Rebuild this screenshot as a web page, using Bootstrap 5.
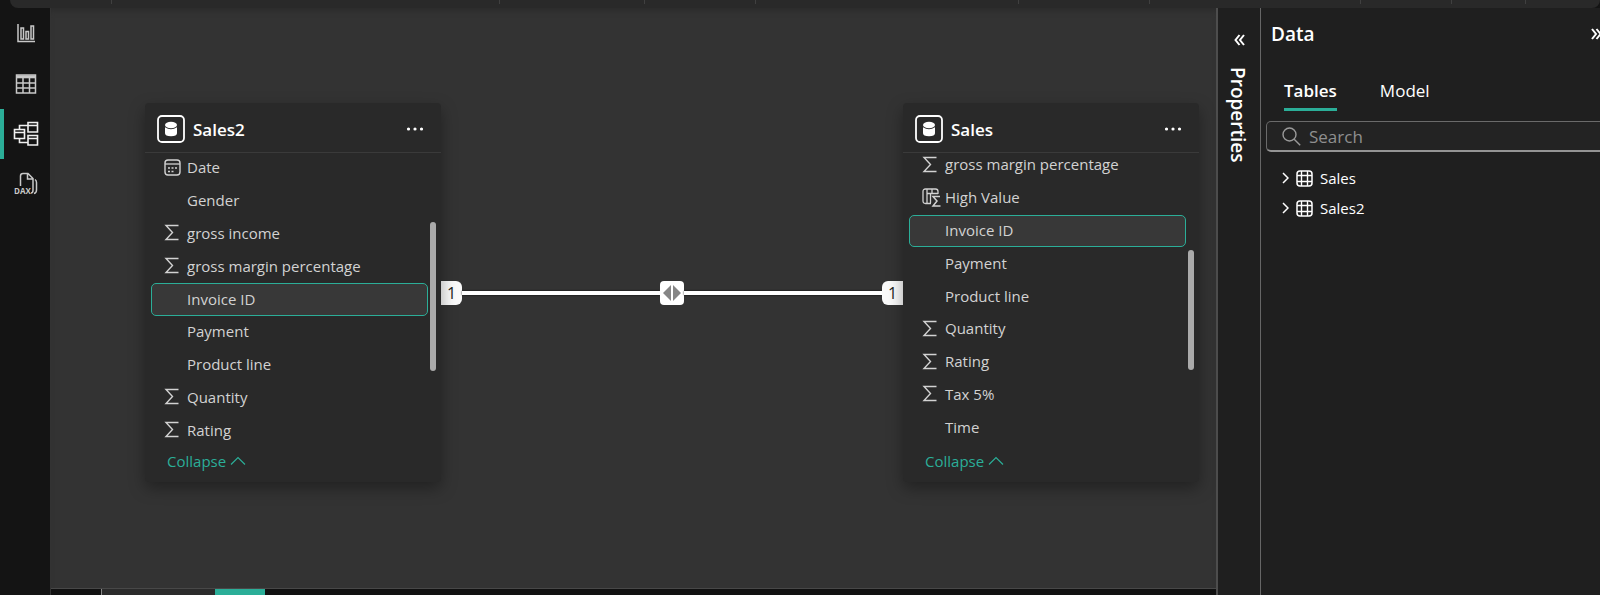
<!DOCTYPE html>
<html lang="en" data-bs-theme="dark">
<head>
<meta charset="utf-8">
<meta name="viewport" content="width=device-width, initial-scale=1">
<title>Model view</title>
<link href="https://cdn.jsdelivr.net/npm/bootstrap@5.3.0/dist/css/bootstrap.min.css" rel="stylesheet">
<style>
  :root { --accent: #2bae98; --line: #4d4d4d; }
  body { font-family: "Open Sans", "Noto Sans", sans-serif; font-size: 15px; line-height: 20px; background: #141414; color: #d2d2d2; }
  svg { display: block; flex: none; fill: none; stroke: currentColor; }
  button { color: inherit; }

  .ribbon { height: 8px; margin-left: 10px; background: #292929; border-radius: 0 0 8px 8px; }
  .ribbon-group { height: 4px; border-right: 1px solid #404040; }

  .rail { width: 51px; border-right: 1px solid #333; color: #c8c8c8; padding-top: 1px; }
  .rail-btn { height: 50px; border: 0; border-left: 4px solid transparent; background: none; padding: 0 2px 0 0; }
  .rail-btn.active { border-left-color: var(--accent); color: #f0f0f0; }

  .model-canvas { background: #333; padding: 95px 17px 0 94px; box-shadow: inset 0 6px 6px -4px #2a2a2a; }
  .node { width: 296px; height: 379px; background: #292929; border-radius: 4px; box-shadow: 0 6px 16px rgba(0,0,0,.35); }
  .node-head { height: 50px; border-bottom: 1px solid #3a3a3a; padding: 3px 17px 0 12px; color: #fff; }
  .node-title { font-size: 17px; font-weight: 600; margin: 0 0 0 8px; padding-top: 2px; line-height: 24px; }
  .field-window { height: 294px; overflow: hidden; }
  .field-list { height: 295px; margin: -1px 0 0; padding: 0 13px 0 6px; }
  .field-list.scrolled { margin-top: -4px; }
  .field { flex: 1 1 0; padding: 0 0 2px 12px; gap: 6px; border: 1px solid transparent; border-radius: 5px; }
  .field.selected { border-color: var(--accent); background: #383838; }
  .field-icon { width: 17px; }
  .collapse-btn { color: var(--accent); border: 0; background: none; padding: 4px 0 0 22px; gap: 4px; }
  .thumb { position: absolute; width: 6px; right: 5px; border-radius: 3px; background: #aaa; }
  .thumb-a { top: 119px; height: 149px; }
  .thumb-b { top: 147px; height: 120px; }

  .relation { margin-top: 177px; height: 25px; }
  .relation-line { height: 4px; background: #fff; box-shadow: 0 0 2px #000; }
  .relation-end { width: 21px; height: 24px; background: #fafafa; color: #222; font-size: 16px; }
  .relation-mid { width: 24px; height: 24px; background: #fff; border-radius: 4px; }

  .page-tabs { height: 7px; border-top: 1px solid #484848; background: #111; }
  .page-tab { width: 114px; margin-left: 50px; background: #2b2b2b; border-left: 1px solid #888; }
  .page-add { width: 50px; background: var(--accent); }

  .props { width: 45px; background: #1f1f1f; border-left: 2px solid var(--line); border-right: 1px solid #666; color: #fff; padding-top: 26px; gap: 21px; }
  .props-title { writing-mode: vertical-rl; font-size: 19px; font-weight: 600; line-height: 24px; margin: 0; padding-right: 2px; }
  .plain { border: 0; background: none; padding: 0; }
  .data-pane { width: 339px; background: #1f1f1f; color: #fff; }
  .data-head { height: 51px; padding-left: 10px; margin-right: -2px; }
  .data-title { font-size: 19px; font-weight: 600; line-height: 24px; margin: 0; }
  .data-tabs { padding: 20px 0 0 23px; gap: 43px; }
  .data-tab { border: 0; background: none; padding: 0 0 5px; font-size: 17px; line-height: 24px; border-bottom: 3px solid transparent; }
  .data-tab.active { font-weight: 600; border-bottom-color: var(--accent); }
  .search-box { height: 31px; margin: 10px -8px 0 5px; padding-left: 15px; gap: 8px; border: 1px solid #6a6a6a; border-bottom: 2px solid #949494; border-radius: 5px; background: #232323; color: #9a9a9a; }
  .search-box input { border: 0; background: none; outline: 0; color: #fff; font-size: 17px; padding: 2px 0 0; width: 200px; }
  .search-box input::placeholder { color: #8f8f8f; opacity: 1; }
  .tree { margin: 11px 0 0; padding-left: 21px; }
  .tree-item { height: 30px; }
  .tree-item button { gap: 7px; }
</style>
</head>
<body class="d-flex flex-column vh-100 overflow-hidden">

<svg width="0" height="0" class="position-absolute" aria-hidden="true">
  <symbol id="sigma" viewBox="0 0 17 17"><path d="M14.500 1.500H2l6.500 7L2 15.500h12.500" stroke-width="1.400"/></symbol>
  <symbol id="db" viewBox="0 0 28 28"><rect x="1" y="1" width="26" height="26" rx="4" stroke-width="1.800"/><ellipse cx="14" cy="10" rx="6" ry="3.200" fill="currentColor" stroke="none"/><path d="M8 12.300q6 4 12 0v6q0 3-6 3t-6-3z" fill="currentColor" stroke="none"/></symbol>
  <symbol id="dots" viewBox="0 0 18 6"><path d="M2.500 3h.01M9 3h.01M15.500 3h.01" stroke-width="3.200" stroke-linecap="round"/></symbol>
  <symbol id="up" viewBox="0 0 16 10"><path d="M1 8.500 8 1.500l7 7" stroke-width="1.200"/></symbol>
  <symbol id="grid" viewBox="0 0 17 17"><rect x="1" y="1" width="15" height="15" rx="3" stroke-width="1.500"/><path d="M5.500 1v15M11.500 1v15M1 5.500h15M1 11.500h15" stroke-width="1.400"/></symbol>
  <symbol id="chev" viewBox="0 0 7 12"><path d="m1 1 5 5-5 5" stroke-width="1.500"/></symbol>
</svg>

<header class="ribbon d-flex flex-shrink-0">
  <div class="ribbon-group" style="width:102px"></div>
  <div class="ribbon-group" style="width:388px"></div>
  <div class="ribbon-group" style="width:145px"></div>
  <div class="ribbon-group" style="width:111px"></div>
  <div class="ribbon-group" style="width:263px"></div>
  <div class="ribbon-group" style="width:131px"></div>
  <div class="ribbon-group" style="width:211px"></div>
  <div class="ribbon-group" style="width:91px"></div>
  <div class="ribbon-group" style="width:74px"></div>
</header>

<div class="d-flex flex-grow-1 overflow-hidden">
  <nav class="rail d-flex flex-column flex-shrink-0" aria-label="Views">
    <button class="rail-btn d-flex align-items-center justify-content-center" aria-label="Report view">
      <svg width="20" height="20" viewBox="0 0 20 20" stroke-width="1.500"><path d="M2 0v17.500h17"/><path d="M5 4h2.500v11H5zM10 7.500h2.500V15H10zM15 2h2.500v13H15z" stroke-width="1.500"/></svg>
    </button>
    <button class="rail-btn d-flex align-items-center justify-content-center" aria-label="Table view">
      <svg width="22" height="20" viewBox="0 0 22 20" stroke-width="1.500"><path d="M1.500 1h19v18h-19zM1.500 9h19M1.500 14h19M8 4v15M14.500 4v15"/><path d="M1.500 2.800h19" stroke-width="3"/></svg>
    </button>
    <button class="rail-btn active d-flex align-items-center justify-content-center" aria-label="Model view">
      <svg width="26" height="26" viewBox="0 0 26 26" stroke-width="1.600"><path d="M1.500 8.500h10v9h-10zM1.500 11.500h10M15 1.500h9.500V11H15zM15 4.500h9.500M15 14.500h9.500V24H15zM15 17.500h9.500M6.500 8.500v-4H15M6.500 17.500v4H15"/></svg>
    </button>
    <button class="rail-btn d-flex align-items-center justify-content-center" aria-label="DAX query view">
      <svg width="26" height="24" viewBox="0 0 26 24" stroke-width="1.500"><path d="M7.500 14V4q0-2.500 2.500-2.500h5l5 5V18q0 3-2 3M14.500 1.500V7H20M22 7.500q1.500 1 1.500 3V18q0 3-2.500 3.500"/><text x="1" y="22" font-family="Open Sans, sans-serif" font-size="8" font-weight="700" fill="currentColor" stroke="none">DAX</text></svg>
    </button>
  </nav>

  <div class="d-flex flex-column flex-grow-1">
    <main class="model-canvas d-flex align-items-start flex-grow-1">
      <section class="node position-relative d-flex flex-column flex-shrink-0">
        <div class="node-head d-flex align-items-center">
          <svg width="28" height="28"><use href="#db"/></svg>
          <h2 class="node-title">Sales2</h2>
          <button class="plain ms-auto" aria-label="More options"><svg width="18" height="6"><use href="#dots"/></svg></button>
        </div>
        <div class="field-window">
          <ul class="field-list list-unstyled d-flex flex-column">
            <li class="field d-flex align-items-center"><span class="field-icon"><svg width="17" height="17" viewBox="0 0 17 17"><rect x="1" y="1" width="15" height="15" rx="3" stroke-width="1.400"/><path d="M1 5h15" stroke-width="1.300"/><path d="M4 9h2m1.500 0h2M11 9h2M4 12.500h2m1.500 0h2" stroke-width="1.700"/></svg></span>Date</li>
            <li class="field d-flex align-items-center"><span class="field-icon"></span>Gender</li>
            <li class="field d-flex align-items-center"><svg width="17" height="17"><use href="#sigma"/></svg>gross income</li>
            <li class="field d-flex align-items-center"><svg width="17" height="17"><use href="#sigma"/></svg>gross margin percentage</li>
            <li class="field selected d-flex align-items-center"><span class="field-icon"></span>Invoice ID</li>
            <li class="field d-flex align-items-center"><span class="field-icon"></span>Payment</li>
            <li class="field d-flex align-items-center"><span class="field-icon"></span>Product line</li>
            <li class="field d-flex align-items-center"><svg width="17" height="17"><use href="#sigma"/></svg>Quantity</li>
            <li class="field d-flex align-items-center"><svg width="17" height="17"><use href="#sigma"/></svg>Rating</li>
          </ul>
        </div>
        <button class="collapse-btn d-flex align-items-center">Collapse <svg width="16" height="10"><use href="#up"/></svg></button>
        <div class="thumb thumb-a"></div>
      </section>

      <div class="relation d-flex align-items-center flex-grow-1">
        <span class="relation-end rounded-end d-flex align-items-center justify-content-center">1</span>
        <span class="relation-line flex-grow-1"></span>
        <span class="relation-mid d-flex align-items-center justify-content-center"><svg width="18" height="16" viewBox="0 0 18 16"><path d="M8 0v16L0 8zM10 0v16l8-8z" fill="#858585" stroke="none"/></svg></span>
        <span class="relation-line flex-grow-1"></span>
        <span class="relation-end rounded-start d-flex align-items-center justify-content-center">1</span>
      </div>

      <section class="node position-relative d-flex flex-column flex-shrink-0">
        <div class="node-head d-flex align-items-center">
          <svg width="28" height="28"><use href="#db"/></svg>
          <h2 class="node-title">Sales</h2>
          <button class="plain ms-auto" aria-label="More options"><svg width="18" height="6"><use href="#dots"/></svg></button>
        </div>
        <div class="field-window">
          <ul class="field-list scrolled list-unstyled d-flex flex-column">
            <li class="field d-flex align-items-center"><svg width="17" height="17"><use href="#sigma"/></svg>gross margin percentage</li>
            <li class="field d-flex align-items-center"><span class="field-icon"><svg width="19" height="19" viewBox="0 0 19 19" stroke-width="1.300"><path d="M9 15.500H3.500q-2.500 0-2.500-2.500V3.500Q1 1 3.500 1h10Q16 1 16 3.500V6M5 1v14.500M8.500 15V5.500M5 5.500h11M10 1v4.500"/><path d="M18 8.500h-7l4 4.500-4 5h7.500" stroke-width="1.500"/></svg></span>High Value</li>
            <li class="field selected d-flex align-items-center"><span class="field-icon"></span>Invoice ID</li>
            <li class="field d-flex align-items-center"><span class="field-icon"></span>Payment</li>
            <li class="field d-flex align-items-center"><span class="field-icon"></span>Product line</li>
            <li class="field d-flex align-items-center"><svg width="17" height="17"><use href="#sigma"/></svg>Quantity</li>
            <li class="field d-flex align-items-center"><svg width="17" height="17"><use href="#sigma"/></svg>Rating</li>
            <li class="field d-flex align-items-center"><svg width="17" height="17"><use href="#sigma"/></svg>Tax 5%</li>
            <li class="field d-flex align-items-center"><span class="field-icon"></span>Time</li>
          </ul>
        </div>
        <button class="collapse-btn d-flex align-items-center">Collapse <svg width="16" height="10"><use href="#up"/></svg></button>
        <div class="thumb thumb-b"></div>
      </section>
    </main>
    <div class="page-tabs d-flex flex-shrink-0">
      <div class="page-tab"></div>
      <div class="page-add"></div>
    </div>
  </div>

  <aside class="props d-flex flex-column align-items-center flex-shrink-0">
    <button class="plain" aria-label="Expand properties"><svg width="11" height="12" viewBox="0 0 11 12" stroke-width="2"><path d="M5.500 1 1.500 6l4 5M10 1 6 6l4 5"/></svg></button>
    <h2 class="props-title">Properties</h2>
  </aside>

  <aside class="data-pane flex-shrink-0">
    <div class="data-head d-flex align-items-center justify-content-between">
      <h2 class="data-title">Data</h2>
      <button class="plain" aria-label="Collapse data pane"><svg width="11" height="12" viewBox="0 0 11 12" stroke-width="2"><path d="m1 1 4 5-4 5M5.500 1l4 5-4 5"/></svg></button>
    </div>
    <div class="data-tabs d-flex" role="tablist">
      <button class="data-tab active" role="tab" aria-selected="true">Tables</button>
      <button class="data-tab" role="tab" aria-selected="false">Model</button>
    </div>
    <label class="search-box d-flex align-items-center">
      <svg width="19" height="19" viewBox="0 0 19 19" stroke-width="1.400"><circle cx="7.500" cy="7.500" r="6.500"/><path d="m12.200 12.200 6 6"/></svg>
      <input type="search" placeholder="Search" aria-label="Search">
    </label>
    <ul class="tree list-unstyled">
      <li class="tree-item d-flex align-items-center"><button class="plain d-flex align-items-center"><svg width="7" height="12"><use href="#chev"/></svg><svg width="17" height="17"><use href="#grid"/></svg>Sales</button></li>
      <li class="tree-item d-flex align-items-center"><button class="plain d-flex align-items-center"><svg width="7" height="12"><use href="#chev"/></svg><svg width="17" height="17"><use href="#grid"/></svg>Sales2</button></li>
    </ul>
  </aside>
</div>
<script src="https://cdn.jsdelivr.net/npm/bootstrap@5.3.0/dist/js/bootstrap.bundle.min.js"></script>
</body>
</html>
